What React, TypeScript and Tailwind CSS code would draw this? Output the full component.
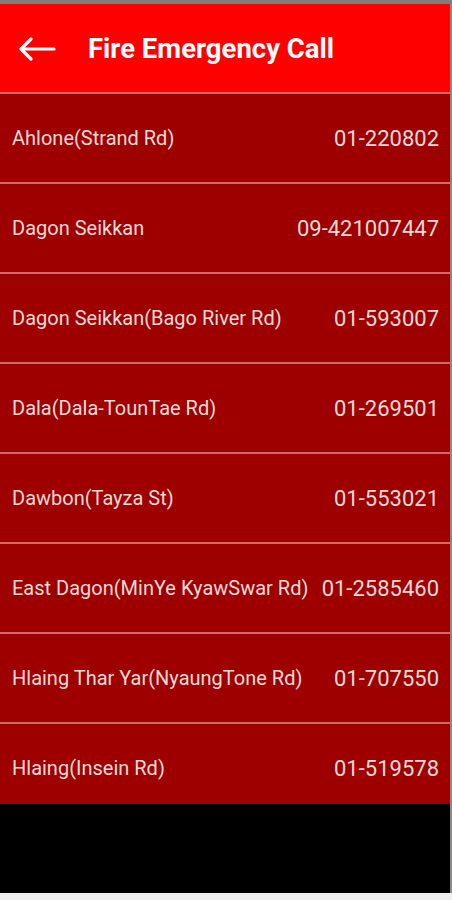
import React from 'react';

interface Station {
  name: string;
  phone: string;
}

const stations: Station[] = [
  { name: 'Ahlone(Strand Rd)', phone: '01-220802' },
  { name: 'Dagon Seikkan', phone: '09-421007447' },
  { name: 'Dagon Seikkan(Bago River Rd)', phone: '01-593007' },
  { name: 'Dala(Dala-TounTae Rd)', phone: '01-269501' },
  { name: 'Dawbon(Tayza St)', phone: '01-553021' },
  { name: 'East Dagon(MinYe KyawSwar Rd)', phone: '01-2585460' },
  { name: 'Hlaing Thar Yar(NyaungTone Rd)', phone: '01-707550' },
  { name: 'Hlaing(Insein Rd)', phone: '01-519578' },
];

const App: React.FC = () => {
  return (
    <div
      className="flex h-[900px] w-[452px] flex-col overflow-hidden bg-[#f0f0f0]"
      style={{ fontFamily: 'Roboto, "Noto Sans", sans-serif' }}
    >
      <div className="h-[4px] shrink-0 bg-[#7e7e7e]" />
      <div className="flex h-[889px] shrink-0">
        <div className="flex w-[450px] flex-col">
          {/* header */}
          <div className="flex h-[88px] shrink-0 items-center bg-[#fe0000]">
            <svg width="38" height="24" viewBox="0 0 38 24" className="ml-[18px] mt-[2px]">
              <path
                d="M36 12H3M13 2L3 12l10 10"
                fill="none"
                stroke="#fff"
                strokeWidth="3.2"
                strokeLinecap="round"
                strokeLinejoin="round"
              />
            </svg>
            <h1 className="ml-[32px] mt-[2px] text-[27.5px] font-bold text-white">
              Fire Emergency Call
            </h1>
          </div>

          {/* list */}
          <div className="flex-1 overflow-hidden bg-[#9e0000]">
            {stations.map(s => (
              <div
                key={s.name}
                className="flex h-[90px] items-center justify-between border-t-2 border-[#cf6b6b] pl-[12px] pr-[11px] text-[20px] text-[#f2dada]"
              >
                <span>{s.name}</span>
                <span className="text-[22px]">{s.phone}</span>
              </div>
            ))}
          </div>

          {/* nav bar */}
          <div className="h-[89px] shrink-0 bg-black" />
        </div>
        <div className="w-[2px] bg-[#8a8a8a]" />
      </div>
    </div>
  );
};

export default App;
